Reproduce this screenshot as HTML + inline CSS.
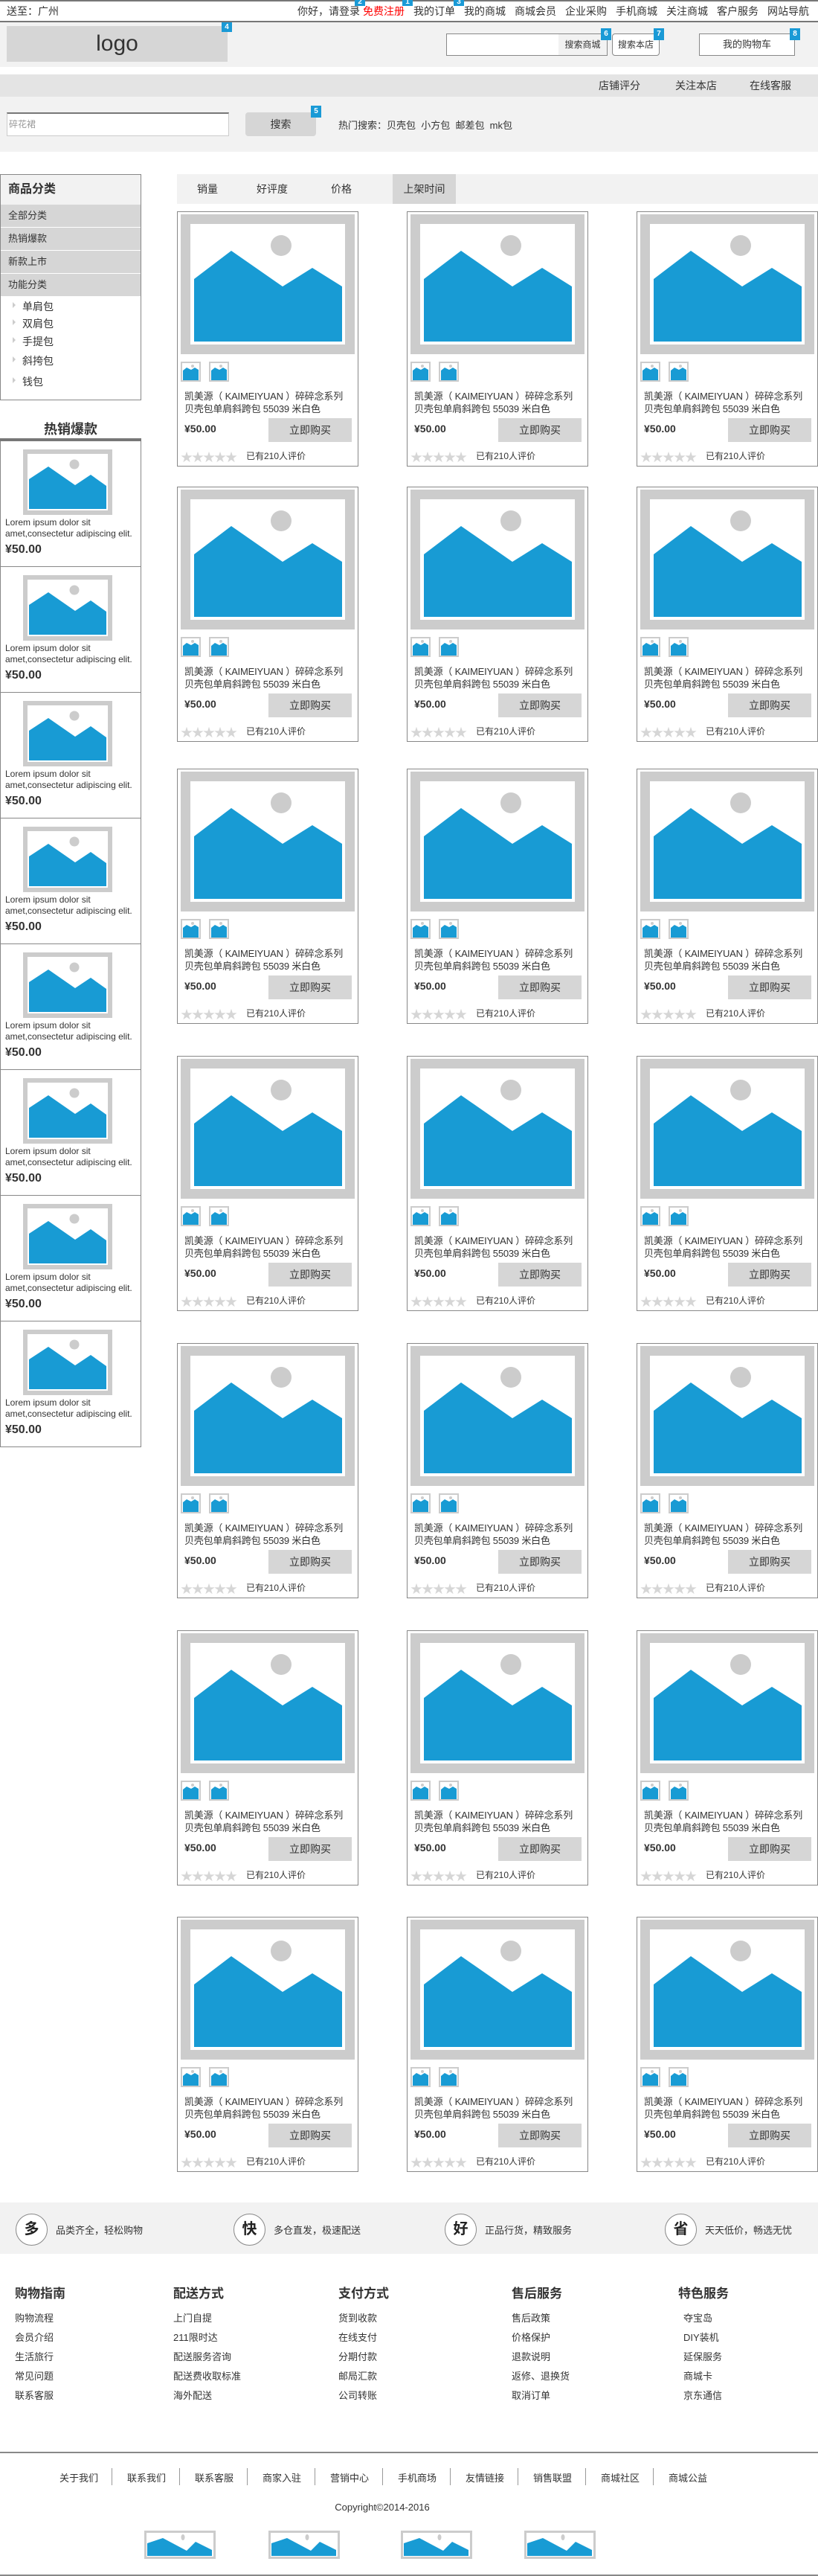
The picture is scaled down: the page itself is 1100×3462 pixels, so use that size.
<!DOCTYPE html>
<html><head><meta charset="utf-8">
<style>
*{margin:0;padding:0;box-sizing:border-box}
body{width:1100px;height:3462px;position:relative;background:#fff;font-family:"Liberation Sans","Noto Sans CJK SC",sans-serif;color:#333;overflow:hidden}
.a{position:absolute}
.badge{position:absolute;width:14px;height:16px;background:#1a9ad6;color:#fff;font-size:10px;text-align:center;line-height:16px;font-weight:bold}
.top{left:0;top:0;width:1100px;height:30px;border-top:2px solid #777;border-bottom:2px solid #777;font-size:14px;line-height:26px}
.toplinks{position:absolute;right:12px;top:0;display:flex}
.toplinks span{margin-left:12px}
.card{position:absolute;width:244px;height:343px;border:1px solid #888;background:#fff}
.card .im{position:absolute;left:4px;top:3px}
.card .th{position:absolute;top:201px}
.card .t{position:absolute;left:9px;top:239px;font-size:13px;line-height:17px;color:#333;white-space:nowrap;letter-spacing:-0.2px}
.card .p{position:absolute;left:9px;top:283px;font-size:14px;font-weight:bold;color:#333}
.card .b{position:absolute;left:122px;top:277px;width:112px;height:32px;background:#d6d6d6;text-align:center;line-height:32px;font-size:14px;color:#333}
.card .s{position:absolute;left:4px;top:316px;font-size:16px;color:#d6d6d6;letter-spacing:-1px}
.card .r{position:absolute;left:92px;top:319px;font-size:12px;color:#333}
.hot{position:absolute;left:0;width:190px;height:169px;border:1px solid #888;border-top:none;background:#fff}
.hot svg{position:absolute;left:30px;top:11px}
.hot .lt{position:absolute;left:6px;top:102px;font-size:12px;line-height:15px;color:#333;white-space:nowrap}
.hot .lp{position:absolute;left:6px;top:137px;font-size:16px;font-weight:bold;color:#333}
.cat{position:absolute;left:1px;width:188px;height:30px;background:#d6d6d6;font-size:13px;line-height:30px;padding-left:10px;color:#333}
.sub{position:absolute;left:30px;font-size:14px;color:#333}
.tri{position:absolute;left:17px;width:0;height:0;border-left:4px solid #ccc;border-top:4px solid transparent;border-bottom:4px solid transparent}
.fh{position:absolute;top:3068px;font-size:17px;font-weight:bold;color:#333}
.fl{position:absolute;font-size:13px;color:#333;line-height:26px}
.circ{position:absolute;top:2975px;width:43px;height:43px;border:1px solid #888;border-radius:50%;background:#fff;text-align:center;line-height:41px;font-size:20px;font-weight:bold;color:#222}
.st{position:absolute;top:2987px;font-size:13px;color:#333}
.bl{position:absolute;top:3320px;font-size:13px;color:#333}
.sep{position:absolute;top:3317px;width:1px;height:23px;background:#999}
</style></head><body>

<div class="a top">
<span style="position:absolute;left:9px">送至：广州</span>
<div class="toplinks"><span>你好，请登录</span><span style="margin-left:4px;color:#f00">免费注册</span><span>我的订单</span><span>我的商城</span><span>商城会员</span><span>企业采购</span><span>手机商城</span><span>关注商城</span><span>客户服务</span><span>网站导航</span></div>
</div>
<div class="badge" style="left:477px;top:0;height:8px;line-height:6px">2</div>
<div class="badge" style="left:541px;top:0;height:8px;line-height:6px">1</div>
<div class="badge" style="left:610px;top:0;height:8px;line-height:6px">3</div>

<div class="a" style="left:0;top:30px;width:1100px;height:60px;background:#f2f2f2"></div>
<div class="a" style="left:9px;top:35px;width:297px;height:48px;background:#d6d6d6;text-align:center;line-height:48px;font-size:30px;color:#333">logo</div>
<div class="badge" style="left:298px;top:30px;height:13px;line-height:13px">4</div>
<div class="a" style="left:600px;top:45px;width:217px;height:30px;background:#fff;border:1px solid #888"></div>
<div class="a" style="left:751px;top:46px;width:65px;height:28px;background:#f2f2f2;font-size:12px;line-height:28px;text-align:center">搜索商城</div>
<div class="a" style="left:823px;top:45px;width:64px;height:30px;background:#fff;border:1px solid #888;border-radius:4px;font-size:12px;line-height:28px;text-align:center">搜索本店</div>
<div class="a" style="left:940px;top:45px;width:129px;height:30px;background:#fff;border:1px solid #888;font-size:13px;line-height:28px;text-align:center">我的购物车</div>
<div class="badge" style="left:808px;top:38px">6</div>
<div class="badge" style="left:879px;top:38px">7</div>
<div class="badge" style="left:1062px;top:38px">8</div>

<div class="a" style="left:0;top:100px;width:1100px;height:30px;background:#e4e4e4;font-size:14px;line-height:30px">
<span class="a" style="left:805px">店铺评分</span><span class="a" style="left:908px">关注本店</span><span class="a" style="left:1008px">在线客服</span></div>
<div class="a" style="left:0;top:130px;width:1100px;height:74px;background:#f2f2f2"></div>
<div class="a" style="left:9px;top:151px;width:299px;height:32px;background:#fff;border:1px solid #ccc;border-top:2px solid #777;font-size:12px;line-height:28px;color:#999;padding-left:2px">碎花裙</div>
<div class="a" style="left:330px;top:151px;width:95px;height:32px;background:#d6d6d6;border-radius:4px;text-align:center;line-height:32px;font-size:14px">搜索</div>
<div class="badge" style="left:418px;top:142px">5</div>
<div class="a" style="left:455px;top:158px;font-size:13px">热门搜索：贝壳包&nbsp;&nbsp;小方包&nbsp;&nbsp;邮差包&nbsp;&nbsp;mk包</div>

<div class="a" style="left:0;top:234px;width:190px;height:304px;border:1px solid #888;background:#fff"></div>
<div class="a" style="left:1px;top:235px;width:188px;height:40px;background:#f2f2f2;font-size:16px;font-weight:bold;line-height:40px;padding-left:10px">商品分类</div>
<div class="cat" style="top:275px">全部分类</div>
<div class="cat" style="top:306px">热销爆款</div>
<div class="cat" style="top:337px">新款上市</div>
<div class="cat" style="top:368px">功能分类</div>
<div class="tri" style="top:406px"></div><div class="sub" style="top:402px">单肩包</div>
<div class="tri" style="top:429px"></div><div class="sub" style="top:425px">双肩包</div>
<div class="tri" style="top:453px"></div><div class="sub" style="top:449px">手提包</div>
<div class="tri" style="top:479px"></div><div class="sub" style="top:475px">斜挎包</div>
<div class="tri" style="top:507px"></div><div class="sub" style="top:503px">钱包</div>

<div class="a" style="left:0;top:563px;width:190px;text-align:center;font-size:18px;font-weight:bold">热销爆款</div>
<div class="a" style="left:0;top:589px;width:190px;height:4px;background:#777"></div>

<div class="hot" style="top:593px"><svg width="120" height="88"><rect width="120" height="88" fill="#ccc"/><rect x="6" y="6" width="108" height="76" fill="#fff"/><polygon points="8,40 34,23 70,48 91,34 112,49 112,80 8,80" fill="#189bd4"/><circle cx="69" cy="20" r="6.5" fill="#ccc"/></svg><div class="lt">Lorem ipsum dolor sit<br>amet,consectetur adipiscing elit.</div><div class="lp">¥50.00</div></div>
<div class="hot" style="top:762px"><svg width="120" height="88"><rect width="120" height="88" fill="#ccc"/><rect x="6" y="6" width="108" height="76" fill="#fff"/><polygon points="8,40 34,23 70,48 91,34 112,49 112,80 8,80" fill="#189bd4"/><circle cx="69" cy="20" r="6.5" fill="#ccc"/></svg><div class="lt">Lorem ipsum dolor sit<br>amet,consectetur adipiscing elit.</div><div class="lp">¥50.00</div></div>
<div class="hot" style="top:931px"><svg width="120" height="88"><rect width="120" height="88" fill="#ccc"/><rect x="6" y="6" width="108" height="76" fill="#fff"/><polygon points="8,40 34,23 70,48 91,34 112,49 112,80 8,80" fill="#189bd4"/><circle cx="69" cy="20" r="6.5" fill="#ccc"/></svg><div class="lt">Lorem ipsum dolor sit<br>amet,consectetur adipiscing elit.</div><div class="lp">¥50.00</div></div>
<div class="hot" style="top:1100px"><svg width="120" height="88"><rect width="120" height="88" fill="#ccc"/><rect x="6" y="6" width="108" height="76" fill="#fff"/><polygon points="8,40 34,23 70,48 91,34 112,49 112,80 8,80" fill="#189bd4"/><circle cx="69" cy="20" r="6.5" fill="#ccc"/></svg><div class="lt">Lorem ipsum dolor sit<br>amet,consectetur adipiscing elit.</div><div class="lp">¥50.00</div></div>
<div class="hot" style="top:1269px"><svg width="120" height="88"><rect width="120" height="88" fill="#ccc"/><rect x="6" y="6" width="108" height="76" fill="#fff"/><polygon points="8,40 34,23 70,48 91,34 112,49 112,80 8,80" fill="#189bd4"/><circle cx="69" cy="20" r="6.5" fill="#ccc"/></svg><div class="lt">Lorem ipsum dolor sit<br>amet,consectetur adipiscing elit.</div><div class="lp">¥50.00</div></div>
<div class="hot" style="top:1438px"><svg width="120" height="88"><rect width="120" height="88" fill="#ccc"/><rect x="6" y="6" width="108" height="76" fill="#fff"/><polygon points="8,40 34,23 70,48 91,34 112,49 112,80 8,80" fill="#189bd4"/><circle cx="69" cy="20" r="6.5" fill="#ccc"/></svg><div class="lt">Lorem ipsum dolor sit<br>amet,consectetur adipiscing elit.</div><div class="lp">¥50.00</div></div>
<div class="hot" style="top:1607px"><svg width="120" height="88"><rect width="120" height="88" fill="#ccc"/><rect x="6" y="6" width="108" height="76" fill="#fff"/><polygon points="8,40 34,23 70,48 91,34 112,49 112,80 8,80" fill="#189bd4"/><circle cx="69" cy="20" r="6.5" fill="#ccc"/></svg><div class="lt">Lorem ipsum dolor sit<br>amet,consectetur adipiscing elit.</div><div class="lp">¥50.00</div></div>
<div class="hot" style="top:1776px"><svg width="120" height="88"><rect width="120" height="88" fill="#ccc"/><rect x="6" y="6" width="108" height="76" fill="#fff"/><polygon points="8,40 34,23 70,48 91,34 112,49 112,80 8,80" fill="#189bd4"/><circle cx="69" cy="20" r="6.5" fill="#ccc"/></svg><div class="lt">Lorem ipsum dolor sit<br>amet,consectetur adipiscing elit.</div><div class="lp">¥50.00</div></div>

<div class="a" style="left:238px;top:234px;width:862px;height:40px;background:#f2f2f2;font-size:14px;line-height:40px">
<span class="a" style="left:27px">销量</span><span class="a" style="left:107px">好评度</span><span class="a" style="left:207px">价格</span>
<span class="a" style="left:290px;width:85px;height:40px;background:#d6d6d6;text-align:center">上架时间</span></div>

<div class="card" style="left:238px;top:284px"><svg class="im" width="234" height="188"><rect width="234" height="188" fill="#ccc"/><rect x="13" y="13" width="208" height="162" fill="#fff"/><polygon points="18,87 68,49 137,97 177,72 217,97 217,171 18,171" fill="#189bd4"/><circle cx="135" cy="42" r="14" fill="#ccc"/></svg><svg class="th" style="left:4px" width="27" height="27"><rect width="27" height="27" fill="#ccc"/><rect x="2" y="2" width="23" height="23" fill="#fff"/><polygon points="3,12 8,8 14,11 19,8 24,11 24,25 3,25" fill="#189bd4"/><circle cx="16" cy="6" r="2" fill="#ccc"/></svg><svg class="th" style="left:42px" width="27" height="27"><rect width="27" height="27" fill="#ccc"/><rect x="2" y="2" width="23" height="23" fill="#fff"/><polygon points="3,12 8,8 14,11 19,8 24,11 24,25 3,25" fill="#189bd4"/><circle cx="16" cy="6" r="2" fill="#ccc"/></svg><div class="t">凯美源（ KAIMEIYUAN ）碎碎念系列<br>贝壳包单肩斜跨包 55039 米白色</div><div class="p">¥50.00</div><div class="b">立即购买</div><div class="s">★★★★★</div><div class="r">已有210人评价</div></div>
<div class="card" style="left:547px;top:284px"><svg class="im" width="234" height="188"><rect width="234" height="188" fill="#ccc"/><rect x="13" y="13" width="208" height="162" fill="#fff"/><polygon points="18,87 68,49 137,97 177,72 217,97 217,171 18,171" fill="#189bd4"/><circle cx="135" cy="42" r="14" fill="#ccc"/></svg><svg class="th" style="left:4px" width="27" height="27"><rect width="27" height="27" fill="#ccc"/><rect x="2" y="2" width="23" height="23" fill="#fff"/><polygon points="3,12 8,8 14,11 19,8 24,11 24,25 3,25" fill="#189bd4"/><circle cx="16" cy="6" r="2" fill="#ccc"/></svg><svg class="th" style="left:42px" width="27" height="27"><rect width="27" height="27" fill="#ccc"/><rect x="2" y="2" width="23" height="23" fill="#fff"/><polygon points="3,12 8,8 14,11 19,8 24,11 24,25 3,25" fill="#189bd4"/><circle cx="16" cy="6" r="2" fill="#ccc"/></svg><div class="t">凯美源（ KAIMEIYUAN ）碎碎念系列<br>贝壳包单肩斜跨包 55039 米白色</div><div class="p">¥50.00</div><div class="b">立即购买</div><div class="s">★★★★★</div><div class="r">已有210人评价</div></div>
<div class="card" style="left:856px;top:284px"><svg class="im" width="234" height="188"><rect width="234" height="188" fill="#ccc"/><rect x="13" y="13" width="208" height="162" fill="#fff"/><polygon points="18,87 68,49 137,97 177,72 217,97 217,171 18,171" fill="#189bd4"/><circle cx="135" cy="42" r="14" fill="#ccc"/></svg><svg class="th" style="left:4px" width="27" height="27"><rect width="27" height="27" fill="#ccc"/><rect x="2" y="2" width="23" height="23" fill="#fff"/><polygon points="3,12 8,8 14,11 19,8 24,11 24,25 3,25" fill="#189bd4"/><circle cx="16" cy="6" r="2" fill="#ccc"/></svg><svg class="th" style="left:42px" width="27" height="27"><rect width="27" height="27" fill="#ccc"/><rect x="2" y="2" width="23" height="23" fill="#fff"/><polygon points="3,12 8,8 14,11 19,8 24,11 24,25 3,25" fill="#189bd4"/><circle cx="16" cy="6" r="2" fill="#ccc"/></svg><div class="t">凯美源（ KAIMEIYUAN ）碎碎念系列<br>贝壳包单肩斜跨包 55039 米白色</div><div class="p">¥50.00</div><div class="b">立即购买</div><div class="s">★★★★★</div><div class="r">已有210人评价</div></div>

<div class="card" style="left:238px;top:654px"><svg class="im" width="234" height="188"><rect width="234" height="188" fill="#ccc"/><rect x="13" y="13" width="208" height="162" fill="#fff"/><polygon points="18,87 68,49 137,97 177,72 217,97 217,171 18,171" fill="#189bd4"/><circle cx="135" cy="42" r="14" fill="#ccc"/></svg><svg class="th" style="left:4px" width="27" height="27"><rect width="27" height="27" fill="#ccc"/><rect x="2" y="2" width="23" height="23" fill="#fff"/><polygon points="3,12 8,8 14,11 19,8 24,11 24,25 3,25" fill="#189bd4"/><circle cx="16" cy="6" r="2" fill="#ccc"/></svg><svg class="th" style="left:42px" width="27" height="27"><rect width="27" height="27" fill="#ccc"/><rect x="2" y="2" width="23" height="23" fill="#fff"/><polygon points="3,12 8,8 14,11 19,8 24,11 24,25 3,25" fill="#189bd4"/><circle cx="16" cy="6" r="2" fill="#ccc"/></svg><div class="t">凯美源（ KAIMEIYUAN ）碎碎念系列<br>贝壳包单肩斜跨包 55039 米白色</div><div class="p">¥50.00</div><div class="b">立即购买</div><div class="s">★★★★★</div><div class="r">已有210人评价</div></div>
<div class="card" style="left:547px;top:654px"><svg class="im" width="234" height="188"><rect width="234" height="188" fill="#ccc"/><rect x="13" y="13" width="208" height="162" fill="#fff"/><polygon points="18,87 68,49 137,97 177,72 217,97 217,171 18,171" fill="#189bd4"/><circle cx="135" cy="42" r="14" fill="#ccc"/></svg><svg class="th" style="left:4px" width="27" height="27"><rect width="27" height="27" fill="#ccc"/><rect x="2" y="2" width="23" height="23" fill="#fff"/><polygon points="3,12 8,8 14,11 19,8 24,11 24,25 3,25" fill="#189bd4"/><circle cx="16" cy="6" r="2" fill="#ccc"/></svg><svg class="th" style="left:42px" width="27" height="27"><rect width="27" height="27" fill="#ccc"/><rect x="2" y="2" width="23" height="23" fill="#fff"/><polygon points="3,12 8,8 14,11 19,8 24,11 24,25 3,25" fill="#189bd4"/><circle cx="16" cy="6" r="2" fill="#ccc"/></svg><div class="t">凯美源（ KAIMEIYUAN ）碎碎念系列<br>贝壳包单肩斜跨包 55039 米白色</div><div class="p">¥50.00</div><div class="b">立即购买</div><div class="s">★★★★★</div><div class="r">已有210人评价</div></div>
<div class="card" style="left:856px;top:654px"><svg class="im" width="234" height="188"><rect width="234" height="188" fill="#ccc"/><rect x="13" y="13" width="208" height="162" fill="#fff"/><polygon points="18,87 68,49 137,97 177,72 217,97 217,171 18,171" fill="#189bd4"/><circle cx="135" cy="42" r="14" fill="#ccc"/></svg><svg class="th" style="left:4px" width="27" height="27"><rect width="27" height="27" fill="#ccc"/><rect x="2" y="2" width="23" height="23" fill="#fff"/><polygon points="3,12 8,8 14,11 19,8 24,11 24,25 3,25" fill="#189bd4"/><circle cx="16" cy="6" r="2" fill="#ccc"/></svg><svg class="th" style="left:42px" width="27" height="27"><rect width="27" height="27" fill="#ccc"/><rect x="2" y="2" width="23" height="23" fill="#fff"/><polygon points="3,12 8,8 14,11 19,8 24,11 24,25 3,25" fill="#189bd4"/><circle cx="16" cy="6" r="2" fill="#ccc"/></svg><div class="t">凯美源（ KAIMEIYUAN ）碎碎念系列<br>贝壳包单肩斜跨包 55039 米白色</div><div class="p">¥50.00</div><div class="b">立即购买</div><div class="s">★★★★★</div><div class="r">已有210人评价</div></div>

<div class="card" style="left:238px;top:1033px"><svg class="im" width="234" height="188"><rect width="234" height="188" fill="#ccc"/><rect x="13" y="13" width="208" height="162" fill="#fff"/><polygon points="18,87 68,49 137,97 177,72 217,97 217,171 18,171" fill="#189bd4"/><circle cx="135" cy="42" r="14" fill="#ccc"/></svg><svg class="th" style="left:4px" width="27" height="27"><rect width="27" height="27" fill="#ccc"/><rect x="2" y="2" width="23" height="23" fill="#fff"/><polygon points="3,12 8,8 14,11 19,8 24,11 24,25 3,25" fill="#189bd4"/><circle cx="16" cy="6" r="2" fill="#ccc"/></svg><svg class="th" style="left:42px" width="27" height="27"><rect width="27" height="27" fill="#ccc"/><rect x="2" y="2" width="23" height="23" fill="#fff"/><polygon points="3,12 8,8 14,11 19,8 24,11 24,25 3,25" fill="#189bd4"/><circle cx="16" cy="6" r="2" fill="#ccc"/></svg><div class="t">凯美源（ KAIMEIYUAN ）碎碎念系列<br>贝壳包单肩斜跨包 55039 米白色</div><div class="p">¥50.00</div><div class="b">立即购买</div><div class="s">★★★★★</div><div class="r">已有210人评价</div></div>
<div class="card" style="left:547px;top:1033px"><svg class="im" width="234" height="188"><rect width="234" height="188" fill="#ccc"/><rect x="13" y="13" width="208" height="162" fill="#fff"/><polygon points="18,87 68,49 137,97 177,72 217,97 217,171 18,171" fill="#189bd4"/><circle cx="135" cy="42" r="14" fill="#ccc"/></svg><svg class="th" style="left:4px" width="27" height="27"><rect width="27" height="27" fill="#ccc"/><rect x="2" y="2" width="23" height="23" fill="#fff"/><polygon points="3,12 8,8 14,11 19,8 24,11 24,25 3,25" fill="#189bd4"/><circle cx="16" cy="6" r="2" fill="#ccc"/></svg><svg class="th" style="left:42px" width="27" height="27"><rect width="27" height="27" fill="#ccc"/><rect x="2" y="2" width="23" height="23" fill="#fff"/><polygon points="3,12 8,8 14,11 19,8 24,11 24,25 3,25" fill="#189bd4"/><circle cx="16" cy="6" r="2" fill="#ccc"/></svg><div class="t">凯美源（ KAIMEIYUAN ）碎碎念系列<br>贝壳包单肩斜跨包 55039 米白色</div><div class="p">¥50.00</div><div class="b">立即购买</div><div class="s">★★★★★</div><div class="r">已有210人评价</div></div>
<div class="card" style="left:856px;top:1033px"><svg class="im" width="234" height="188"><rect width="234" height="188" fill="#ccc"/><rect x="13" y="13" width="208" height="162" fill="#fff"/><polygon points="18,87 68,49 137,97 177,72 217,97 217,171 18,171" fill="#189bd4"/><circle cx="135" cy="42" r="14" fill="#ccc"/></svg><svg class="th" style="left:4px" width="27" height="27"><rect width="27" height="27" fill="#ccc"/><rect x="2" y="2" width="23" height="23" fill="#fff"/><polygon points="3,12 8,8 14,11 19,8 24,11 24,25 3,25" fill="#189bd4"/><circle cx="16" cy="6" r="2" fill="#ccc"/></svg><svg class="th" style="left:42px" width="27" height="27"><rect width="27" height="27" fill="#ccc"/><rect x="2" y="2" width="23" height="23" fill="#fff"/><polygon points="3,12 8,8 14,11 19,8 24,11 24,25 3,25" fill="#189bd4"/><circle cx="16" cy="6" r="2" fill="#ccc"/></svg><div class="t">凯美源（ KAIMEIYUAN ）碎碎念系列<br>贝壳包单肩斜跨包 55039 米白色</div><div class="p">¥50.00</div><div class="b">立即购买</div><div class="s">★★★★★</div><div class="r">已有210人评价</div></div>

<div class="card" style="left:238px;top:1419px"><svg class="im" width="234" height="188"><rect width="234" height="188" fill="#ccc"/><rect x="13" y="13" width="208" height="162" fill="#fff"/><polygon points="18,87 68,49 137,97 177,72 217,97 217,171 18,171" fill="#189bd4"/><circle cx="135" cy="42" r="14" fill="#ccc"/></svg><svg class="th" style="left:4px" width="27" height="27"><rect width="27" height="27" fill="#ccc"/><rect x="2" y="2" width="23" height="23" fill="#fff"/><polygon points="3,12 8,8 14,11 19,8 24,11 24,25 3,25" fill="#189bd4"/><circle cx="16" cy="6" r="2" fill="#ccc"/></svg><svg class="th" style="left:42px" width="27" height="27"><rect width="27" height="27" fill="#ccc"/><rect x="2" y="2" width="23" height="23" fill="#fff"/><polygon points="3,12 8,8 14,11 19,8 24,11 24,25 3,25" fill="#189bd4"/><circle cx="16" cy="6" r="2" fill="#ccc"/></svg><div class="t">凯美源（ KAIMEIYUAN ）碎碎念系列<br>贝壳包单肩斜跨包 55039 米白色</div><div class="p">¥50.00</div><div class="b">立即购买</div><div class="s">★★★★★</div><div class="r">已有210人评价</div></div>
<div class="card" style="left:547px;top:1419px"><svg class="im" width="234" height="188"><rect width="234" height="188" fill="#ccc"/><rect x="13" y="13" width="208" height="162" fill="#fff"/><polygon points="18,87 68,49 137,97 177,72 217,97 217,171 18,171" fill="#189bd4"/><circle cx="135" cy="42" r="14" fill="#ccc"/></svg><svg class="th" style="left:4px" width="27" height="27"><rect width="27" height="27" fill="#ccc"/><rect x="2" y="2" width="23" height="23" fill="#fff"/><polygon points="3,12 8,8 14,11 19,8 24,11 24,25 3,25" fill="#189bd4"/><circle cx="16" cy="6" r="2" fill="#ccc"/></svg><svg class="th" style="left:42px" width="27" height="27"><rect width="27" height="27" fill="#ccc"/><rect x="2" y="2" width="23" height="23" fill="#fff"/><polygon points="3,12 8,8 14,11 19,8 24,11 24,25 3,25" fill="#189bd4"/><circle cx="16" cy="6" r="2" fill="#ccc"/></svg><div class="t">凯美源（ KAIMEIYUAN ）碎碎念系列<br>贝壳包单肩斜跨包 55039 米白色</div><div class="p">¥50.00</div><div class="b">立即购买</div><div class="s">★★★★★</div><div class="r">已有210人评价</div></div>
<div class="card" style="left:856px;top:1419px"><svg class="im" width="234" height="188"><rect width="234" height="188" fill="#ccc"/><rect x="13" y="13" width="208" height="162" fill="#fff"/><polygon points="18,87 68,49 137,97 177,72 217,97 217,171 18,171" fill="#189bd4"/><circle cx="135" cy="42" r="14" fill="#ccc"/></svg><svg class="th" style="left:4px" width="27" height="27"><rect width="27" height="27" fill="#ccc"/><rect x="2" y="2" width="23" height="23" fill="#fff"/><polygon points="3,12 8,8 14,11 19,8 24,11 24,25 3,25" fill="#189bd4"/><circle cx="16" cy="6" r="2" fill="#ccc"/></svg><svg class="th" style="left:42px" width="27" height="27"><rect width="27" height="27" fill="#ccc"/><rect x="2" y="2" width="23" height="23" fill="#fff"/><polygon points="3,12 8,8 14,11 19,8 24,11 24,25 3,25" fill="#189bd4"/><circle cx="16" cy="6" r="2" fill="#ccc"/></svg><div class="t">凯美源（ KAIMEIYUAN ）碎碎念系列<br>贝壳包单肩斜跨包 55039 米白色</div><div class="p">¥50.00</div><div class="b">立即购买</div><div class="s">★★★★★</div><div class="r">已有210人评价</div></div>

<div class="card" style="left:238px;top:1805px"><svg class="im" width="234" height="188"><rect width="234" height="188" fill="#ccc"/><rect x="13" y="13" width="208" height="162" fill="#fff"/><polygon points="18,87 68,49 137,97 177,72 217,97 217,171 18,171" fill="#189bd4"/><circle cx="135" cy="42" r="14" fill="#ccc"/></svg><svg class="th" style="left:4px" width="27" height="27"><rect width="27" height="27" fill="#ccc"/><rect x="2" y="2" width="23" height="23" fill="#fff"/><polygon points="3,12 8,8 14,11 19,8 24,11 24,25 3,25" fill="#189bd4"/><circle cx="16" cy="6" r="2" fill="#ccc"/></svg><svg class="th" style="left:42px" width="27" height="27"><rect width="27" height="27" fill="#ccc"/><rect x="2" y="2" width="23" height="23" fill="#fff"/><polygon points="3,12 8,8 14,11 19,8 24,11 24,25 3,25" fill="#189bd4"/><circle cx="16" cy="6" r="2" fill="#ccc"/></svg><div class="t">凯美源（ KAIMEIYUAN ）碎碎念系列<br>贝壳包单肩斜跨包 55039 米白色</div><div class="p">¥50.00</div><div class="b">立即购买</div><div class="s">★★★★★</div><div class="r">已有210人评价</div></div>
<div class="card" style="left:547px;top:1805px"><svg class="im" width="234" height="188"><rect width="234" height="188" fill="#ccc"/><rect x="13" y="13" width="208" height="162" fill="#fff"/><polygon points="18,87 68,49 137,97 177,72 217,97 217,171 18,171" fill="#189bd4"/><circle cx="135" cy="42" r="14" fill="#ccc"/></svg><svg class="th" style="left:4px" width="27" height="27"><rect width="27" height="27" fill="#ccc"/><rect x="2" y="2" width="23" height="23" fill="#fff"/><polygon points="3,12 8,8 14,11 19,8 24,11 24,25 3,25" fill="#189bd4"/><circle cx="16" cy="6" r="2" fill="#ccc"/></svg><svg class="th" style="left:42px" width="27" height="27"><rect width="27" height="27" fill="#ccc"/><rect x="2" y="2" width="23" height="23" fill="#fff"/><polygon points="3,12 8,8 14,11 19,8 24,11 24,25 3,25" fill="#189bd4"/><circle cx="16" cy="6" r="2" fill="#ccc"/></svg><div class="t">凯美源（ KAIMEIYUAN ）碎碎念系列<br>贝壳包单肩斜跨包 55039 米白色</div><div class="p">¥50.00</div><div class="b">立即购买</div><div class="s">★★★★★</div><div class="r">已有210人评价</div></div>
<div class="card" style="left:856px;top:1805px"><svg class="im" width="234" height="188"><rect width="234" height="188" fill="#ccc"/><rect x="13" y="13" width="208" height="162" fill="#fff"/><polygon points="18,87 68,49 137,97 177,72 217,97 217,171 18,171" fill="#189bd4"/><circle cx="135" cy="42" r="14" fill="#ccc"/></svg><svg class="th" style="left:4px" width="27" height="27"><rect width="27" height="27" fill="#ccc"/><rect x="2" y="2" width="23" height="23" fill="#fff"/><polygon points="3,12 8,8 14,11 19,8 24,11 24,25 3,25" fill="#189bd4"/><circle cx="16" cy="6" r="2" fill="#ccc"/></svg><svg class="th" style="left:42px" width="27" height="27"><rect width="27" height="27" fill="#ccc"/><rect x="2" y="2" width="23" height="23" fill="#fff"/><polygon points="3,12 8,8 14,11 19,8 24,11 24,25 3,25" fill="#189bd4"/><circle cx="16" cy="6" r="2" fill="#ccc"/></svg><div class="t">凯美源（ KAIMEIYUAN ）碎碎念系列<br>贝壳包单肩斜跨包 55039 米白色</div><div class="p">¥50.00</div><div class="b">立即购买</div><div class="s">★★★★★</div><div class="r">已有210人评价</div></div>

<div class="card" style="left:238px;top:2191px"><svg class="im" width="234" height="188"><rect width="234" height="188" fill="#ccc"/><rect x="13" y="13" width="208" height="162" fill="#fff"/><polygon points="18,87 68,49 137,97 177,72 217,97 217,171 18,171" fill="#189bd4"/><circle cx="135" cy="42" r="14" fill="#ccc"/></svg><svg class="th" style="left:4px" width="27" height="27"><rect width="27" height="27" fill="#ccc"/><rect x="2" y="2" width="23" height="23" fill="#fff"/><polygon points="3,12 8,8 14,11 19,8 24,11 24,25 3,25" fill="#189bd4"/><circle cx="16" cy="6" r="2" fill="#ccc"/></svg><svg class="th" style="left:42px" width="27" height="27"><rect width="27" height="27" fill="#ccc"/><rect x="2" y="2" width="23" height="23" fill="#fff"/><polygon points="3,12 8,8 14,11 19,8 24,11 24,25 3,25" fill="#189bd4"/><circle cx="16" cy="6" r="2" fill="#ccc"/></svg><div class="t">凯美源（ KAIMEIYUAN ）碎碎念系列<br>贝壳包单肩斜跨包 55039 米白色</div><div class="p">¥50.00</div><div class="b">立即购买</div><div class="s">★★★★★</div><div class="r">已有210人评价</div></div>
<div class="card" style="left:547px;top:2191px"><svg class="im" width="234" height="188"><rect width="234" height="188" fill="#ccc"/><rect x="13" y="13" width="208" height="162" fill="#fff"/><polygon points="18,87 68,49 137,97 177,72 217,97 217,171 18,171" fill="#189bd4"/><circle cx="135" cy="42" r="14" fill="#ccc"/></svg><svg class="th" style="left:4px" width="27" height="27"><rect width="27" height="27" fill="#ccc"/><rect x="2" y="2" width="23" height="23" fill="#fff"/><polygon points="3,12 8,8 14,11 19,8 24,11 24,25 3,25" fill="#189bd4"/><circle cx="16" cy="6" r="2" fill="#ccc"/></svg><svg class="th" style="left:42px" width="27" height="27"><rect width="27" height="27" fill="#ccc"/><rect x="2" y="2" width="23" height="23" fill="#fff"/><polygon points="3,12 8,8 14,11 19,8 24,11 24,25 3,25" fill="#189bd4"/><circle cx="16" cy="6" r="2" fill="#ccc"/></svg><div class="t">凯美源（ KAIMEIYUAN ）碎碎念系列<br>贝壳包单肩斜跨包 55039 米白色</div><div class="p">¥50.00</div><div class="b">立即购买</div><div class="s">★★★★★</div><div class="r">已有210人评价</div></div>
<div class="card" style="left:856px;top:2191px"><svg class="im" width="234" height="188"><rect width="234" height="188" fill="#ccc"/><rect x="13" y="13" width="208" height="162" fill="#fff"/><polygon points="18,87 68,49 137,97 177,72 217,97 217,171 18,171" fill="#189bd4"/><circle cx="135" cy="42" r="14" fill="#ccc"/></svg><svg class="th" style="left:4px" width="27" height="27"><rect width="27" height="27" fill="#ccc"/><rect x="2" y="2" width="23" height="23" fill="#fff"/><polygon points="3,12 8,8 14,11 19,8 24,11 24,25 3,25" fill="#189bd4"/><circle cx="16" cy="6" r="2" fill="#ccc"/></svg><svg class="th" style="left:42px" width="27" height="27"><rect width="27" height="27" fill="#ccc"/><rect x="2" y="2" width="23" height="23" fill="#fff"/><polygon points="3,12 8,8 14,11 19,8 24,11 24,25 3,25" fill="#189bd4"/><circle cx="16" cy="6" r="2" fill="#ccc"/></svg><div class="t">凯美源（ KAIMEIYUAN ）碎碎念系列<br>贝壳包单肩斜跨包 55039 米白色</div><div class="p">¥50.00</div><div class="b">立即购买</div><div class="s">★★★★★</div><div class="r">已有210人评价</div></div>

<div class="card" style="left:238px;top:2576px"><svg class="im" width="234" height="188"><rect width="234" height="188" fill="#ccc"/><rect x="13" y="13" width="208" height="162" fill="#fff"/><polygon points="18,87 68,49 137,97 177,72 217,97 217,171 18,171" fill="#189bd4"/><circle cx="135" cy="42" r="14" fill="#ccc"/></svg><svg class="th" style="left:4px" width="27" height="27"><rect width="27" height="27" fill="#ccc"/><rect x="2" y="2" width="23" height="23" fill="#fff"/><polygon points="3,12 8,8 14,11 19,8 24,11 24,25 3,25" fill="#189bd4"/><circle cx="16" cy="6" r="2" fill="#ccc"/></svg><svg class="th" style="left:42px" width="27" height="27"><rect width="27" height="27" fill="#ccc"/><rect x="2" y="2" width="23" height="23" fill="#fff"/><polygon points="3,12 8,8 14,11 19,8 24,11 24,25 3,25" fill="#189bd4"/><circle cx="16" cy="6" r="2" fill="#ccc"/></svg><div class="t">凯美源（ KAIMEIYUAN ）碎碎念系列<br>贝壳包单肩斜跨包 55039 米白色</div><div class="p">¥50.00</div><div class="b">立即购买</div><div class="s">★★★★★</div><div class="r">已有210人评价</div></div>
<div class="card" style="left:547px;top:2576px"><svg class="im" width="234" height="188"><rect width="234" height="188" fill="#ccc"/><rect x="13" y="13" width="208" height="162" fill="#fff"/><polygon points="18,87 68,49 137,97 177,72 217,97 217,171 18,171" fill="#189bd4"/><circle cx="135" cy="42" r="14" fill="#ccc"/></svg><svg class="th" style="left:4px" width="27" height="27"><rect width="27" height="27" fill="#ccc"/><rect x="2" y="2" width="23" height="23" fill="#fff"/><polygon points="3,12 8,8 14,11 19,8 24,11 24,25 3,25" fill="#189bd4"/><circle cx="16" cy="6" r="2" fill="#ccc"/></svg><svg class="th" style="left:42px" width="27" height="27"><rect width="27" height="27" fill="#ccc"/><rect x="2" y="2" width="23" height="23" fill="#fff"/><polygon points="3,12 8,8 14,11 19,8 24,11 24,25 3,25" fill="#189bd4"/><circle cx="16" cy="6" r="2" fill="#ccc"/></svg><div class="t">凯美源（ KAIMEIYUAN ）碎碎念系列<br>贝壳包单肩斜跨包 55039 米白色</div><div class="p">¥50.00</div><div class="b">立即购买</div><div class="s">★★★★★</div><div class="r">已有210人评价</div></div>
<div class="card" style="left:856px;top:2576px"><svg class="im" width="234" height="188"><rect width="234" height="188" fill="#ccc"/><rect x="13" y="13" width="208" height="162" fill="#fff"/><polygon points="18,87 68,49 137,97 177,72 217,97 217,171 18,171" fill="#189bd4"/><circle cx="135" cy="42" r="14" fill="#ccc"/></svg><svg class="th" style="left:4px" width="27" height="27"><rect width="27" height="27" fill="#ccc"/><rect x="2" y="2" width="23" height="23" fill="#fff"/><polygon points="3,12 8,8 14,11 19,8 24,11 24,25 3,25" fill="#189bd4"/><circle cx="16" cy="6" r="2" fill="#ccc"/></svg><svg class="th" style="left:42px" width="27" height="27"><rect width="27" height="27" fill="#ccc"/><rect x="2" y="2" width="23" height="23" fill="#fff"/><polygon points="3,12 8,8 14,11 19,8 24,11 24,25 3,25" fill="#189bd4"/><circle cx="16" cy="6" r="2" fill="#ccc"/></svg><div class="t">凯美源（ KAIMEIYUAN ）碎碎念系列<br>贝壳包单肩斜跨包 55039 米白色</div><div class="p">¥50.00</div><div class="b">立即购买</div><div class="s">★★★★★</div><div class="r">已有210人评价</div></div>

<div class="a" style="left:0;top:2960px;width:1100px;height:69px;background:#f2f2f2"></div>
<div class="circ" style="left:21px">多</div><div class="st" style="left:75px">品类齐全，轻松购物</div>
<div class="circ" style="left:314px">快</div><div class="st" style="left:368px">多仓直发，极速配送</div>
<div class="circ" style="left:598px">好</div><div class="st" style="left:652px">正品行货，精致服务</div>
<div class="circ" style="left:894px">省</div><div class="st" style="left:948px">天天低价，畅选无忧</div>

<div class="fh" style="left:20px">购物指南</div>
<div class="fh" style="left:233px">配送方式</div>
<div class="fh" style="left:455px">支付方式</div>
<div class="fh" style="left:688px">售后服务</div>
<div class="fh" style="left:912px">特色服务</div>
<div class="fl" style="left:20px;top:3103px">购物流程<br>会员介绍<br>生活旅行<br>常见问题<br>联系客服</div>
<div class="fl" style="left:233px;top:3103px">上门自提<br>211限时达<br>配送服务咨询<br>配送费收取标准<br>海外配送</div>
<div class="fl" style="left:455px;top:3103px">货到收款<br>在线支付<br>分期付款<br>邮局汇款<br>公司转账</div>
<div class="fl" style="left:688px;top:3103px">售后政策<br>价格保护<br>退款说明<br>返修、退换货<br>取消订单</div>
<div class="fl" style="left:919px;top:3103px">夺宝岛<br>DIY装机<br>延保服务<br>商城卡<br>京东通信</div>

<div class="a" style="left:0;top:3295px;width:1100px;height:2px;background:#888"></div>
<div class="bl" style="left:80px">关于我们</div><div class="sep" style="left:150px"></div>
<div class="bl" style="left:171px">联系我们</div><div class="sep" style="left:241px"></div>
<div class="bl" style="left:262px">联系客服</div><div class="sep" style="left:332px"></div>
<div class="bl" style="left:353px">商家入驻</div><div class="sep" style="left:423px"></div>
<div class="bl" style="left:444px">营销中心</div><div class="sep" style="left:514px"></div>
<div class="bl" style="left:535px">手机商场</div><div class="sep" style="left:605px"></div>
<div class="bl" style="left:626px">友情链接</div><div class="sep" style="left:696px"></div>
<div class="bl" style="left:717px">销售联盟</div><div class="sep" style="left:787px"></div>
<div class="bl" style="left:808px">商城社区</div><div class="sep" style="left:878px"></div>
<div class="bl" style="left:899px">商城公益</div>
<div class="a" style="left:0;top:3362px;width:1028px;text-align:center;font-size:13px">Copyright©2014-2016</div>

<svg class="a" style="left:194px;top:3401px" width="96" height="38"><rect width="96" height="38" fill="#ccc"/><rect x="3" y="3" width="90" height="32" fill="#fff"/><polygon points="4,17 25,10 57,27 69,15 91,26 91,34 4,34" fill="#189bd4"/><ellipse cx="52" cy="9" rx="2.5" ry="4" fill="#ccc"/></svg>
<svg class="a" style="left:361px;top:3401px" width="96" height="38"><rect width="96" height="38" fill="#ccc"/><rect x="3" y="3" width="90" height="32" fill="#fff"/><polygon points="4,17 25,10 57,27 69,15 91,26 91,34 4,34" fill="#189bd4"/><ellipse cx="52" cy="9" rx="2.5" ry="4" fill="#ccc"/></svg>
<svg class="a" style="left:539px;top:3401px" width="96" height="38"><rect width="96" height="38" fill="#ccc"/><rect x="3" y="3" width="90" height="32" fill="#fff"/><polygon points="4,17 25,10 57,27 69,15 91,26 91,34 4,34" fill="#189bd4"/><ellipse cx="52" cy="9" rx="2.5" ry="4" fill="#ccc"/></svg>
<svg class="a" style="left:705px;top:3401px" width="96" height="38"><rect width="96" height="38" fill="#ccc"/><rect x="3" y="3" width="90" height="32" fill="#fff"/><polygon points="4,17 25,10 57,27 69,15 91,26 91,34 4,34" fill="#189bd4"/><ellipse cx="52" cy="9" rx="2.5" ry="4" fill="#ccc"/></svg>
<div class="a" style="left:0;top:3460px;width:1100px;height:2px;background:#888"></div>
</body></html>
